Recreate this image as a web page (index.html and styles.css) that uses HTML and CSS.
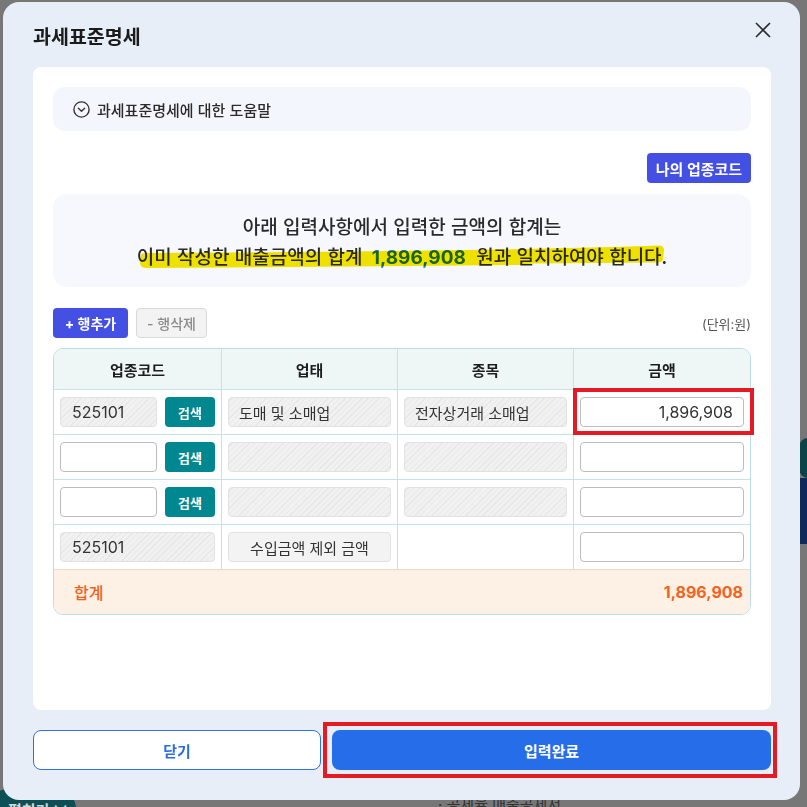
FILE: index.html
```html
<!DOCTYPE html>
<html lang="ko">
<head>
<meta charset="utf-8">
<title>과세표준명세</title>
<link rel="stylesheet" href="styles.css">
</head>
<body>
<div class="backdrop">
  <div class="bg-pill">펼치기 ∨</div>
  <div class="bg-navy"></div>
  <div class="bg-teal"></div>
  <div class="bg-text">· 공제율 매출공제서</div>

  <section class="modal">
    <header class="modal-head">
      <h1 class="modal-title">과세표준명세</h1>
      <button class="close-btn" aria-label="닫기">
        <svg width="16" height="16" viewBox="0 0 16 16"><path d="M1 1 L15 15 M15 1 L1 15" stroke="#2b2b2b" stroke-width="1.6" fill="none"/></svg>
      </button>
    </header>

    <div class="panel">
      <div class="help">
        <svg class="help-icon" width="17" height="17" viewBox="0 0 17 17"><circle cx="8.5" cy="8.5" r="7.6" stroke="#333" stroke-width="1.4" fill="none"/><path d="M5.4 7.2 L8.5 10.2 L11.6 7.2" stroke="#333" stroke-width="1.4" fill="none" stroke-linecap="round" stroke-linejoin="round"/></svg>
        <span>과세표준명세에 대한 도움말</span>
      </div>

      <div class="code-row">
        <button class="btn-indigo btn-mycode">나의 업종코드</button>
      </div>

      <div class="notice">
        <p class="notice-line">아래 입력사항에서 입력한 금액의 합계는</p>
        <p class="notice-line">이미 작성한 매출금액의 합계 <span class="notice-num">1,896,908</span> 원과 일치하여야 합니다.</p>
        <svg class="marker" viewBox="0 0 698 93" preserveAspectRatio="none"><path d="M88 61 Q88 59 94 59 L300 57.5 L415 56 L470 55 L560 53 L607 51.5 Q611 52 611 56 L610 66 Q609 68.5 604 68.5 L480 69.5 L472 71 L300 72.5 L94 74 Q87 74 87 69 Z" fill="#f7e800"/></svg>
      </div>

      <div class="toolbar">
        <button class="btn-indigo btn-add">+ 행추가</button>
        <button class="btn-del">- 행삭제</button>
        <span class="unit">(단위:원)</span>
      </div>

      <div class="table-area">
        <div class="tbl">
          <div class="th">업종코드</div>
          <div class="th">업태</div>
          <div class="th">종목</div>
          <div class="th th-last">금액</div>

          <div class="td"><div class="code-cell"><div class="box hatch code-box">525101</div><button class="btn-search">검색</button></div></div>
          <div class="td"><div class="box hatch">도매 및 소매업</div></div>
          <div class="td"><div class="box hatch">전자상거래 소매업</div></div>
          <div class="td td-last"><input class="inp inp-amount" type="text" value="1,896,908"></div>

          <div class="td"><div class="code-cell"><input class="inp inp-code" type="text" value=""><button class="btn-search">검색</button></div></div>
          <div class="td"><div class="box hatch"></div></div>
          <div class="td"><div class="box hatch"></div></div>
          <div class="td td-last"><input class="inp inp-amount" type="text" value=""></div>

          <div class="td"><div class="code-cell"><input class="inp inp-code" type="text" value=""><button class="btn-search">검색</button></div></div>
          <div class="td"><div class="box hatch"></div></div>
          <div class="td"><div class="box hatch"></div></div>
          <div class="td td-last"><input class="inp inp-amount" type="text" value=""></div>

          <div class="td td-row4"><div class="box hatch code-box">525101</div></div>
          <div class="td td-row4"><div class="box plain">수입금액 제외 금액</div></div>
          <div class="td td-row4"></div>
          <div class="td td-last td-row4"><input class="inp inp-amount" type="text" value=""></div>

          <div class="total">
            <span class="total-label">합계</span>
            <span class="total-value">1,896,908</span>
          </div>
        </div>
        <div class="annot annot-cell"></div>
      </div>
    </div>

    <footer class="modal-foot">
      <button class="btn-outline">닫기</button>
      <div class="primary-wrap">
        <button class="btn-primary">입력완료</button>
        <div class="annot annot-btn"></div>
      </div>
    </footer>
  </section>
</div>
</body>
</html>
```

FILE: styles.css
```css
* { box-sizing: border-box; }

body {
  margin: 0;
  font-family: Inter, "Noto Sans CJK KR", sans-serif;
  color: #222;
}

button {
  font-family: inherit;
  cursor: pointer;
}

.backdrop {
  position: relative;
  width: 807px;
  height: 807px;
  background: #777777;
  padding: 2px 7px 7px 3px;
  overflow: hidden;
}

/* underlying page fragments, dimmed behind the dialog */
.bg-pill {
  position: absolute;
  left: -12px;
  top: 789px;
  width: 88px;
  height: 40px;
  border-radius: 20px;
  background: #0c4f54;
  color: #cfd8d8;
  font-size: 15px;
  font-weight: 700;
  padding: 10px 0 0 20px;
}
.bg-navy {
  position: absolute;
  right: 0;
  top: 478px;
  width: 7px;
  height: 66px;
  background: #0f2a5a;
}
.bg-teal {
  position: absolute;
  right: -10px;
  top: 438px;
  width: 18px;
  height: 40px;
  border-radius: 10px;
  background: #0a4449;
}
.bg-text {
  position: absolute;
  left: 438px;
  top: 793px;
  font-size: 15px;
  color: #333;
}

.modal {
  position: relative;
  z-index: 1;
  height: 798px;
  background: #e7eef8;
  border-radius: 16px;
  padding: 0 29px 0 30px;
  display: flex;
  flex-direction: column;
}

.modal-head {
  height: 65px;
  display: flex;
  justify-content: space-between;
  align-items: flex-start;
  padding-top: 20px;
}

.modal-title {
  margin: 2px 0 0;
  font-size: 19.5px;
  line-height: 26px;
  font-weight: 700;
  color: #1b1b1b;
}

.close-btn {
  width: 16px;
  height: 16px;
  padding: 0;
  border: 0;
  background: none;
  display: block;
}
.close-btn svg { display: block; }

.panel {
  height: 643px;
  background: #fff;
  border-radius: 8px;
  padding: 20px;
}

.help {
  height: 44px;
  background: #f3f7fd;
  border-radius: 12px;
  display: flex;
  align-items: center;
  gap: 7px;
  padding-left: 20px;
  font-family: "Noto Sans CJK KR Medium", "Noto Sans CJK KR", sans-serif;
  font-size: 15px;
  font-weight: 500;
  color: #2b2b2b;
}
.help-icon { display: block; flex: none; }

.code-row {
  margin-top: 22px;
  display: flex;
  justify-content: flex-end;
}

.btn-indigo {
  height: 30px;
  border: 0;
  border-radius: 4px;
  background: #4450e4;
  color: #fff;
  font-weight: 700;
  padding: 0;
}
.btn-mycode {
  width: 104px;
  font-size: 15px;
}

.notice {
  position: relative;
  margin-top: 11px;
  height: 93px;
  background: #f6f8fd;
  border-radius: 14px;
  padding-top: 17px;
  text-align: center;
}
.notice-line {
  margin: 0;
  font-family: "Noto Sans CJK KR Medium", "Noto Sans CJK KR", sans-serif;
  font-size: 19px;
  line-height: 30px;
  font-weight: 500;
  color: #2a2a2a;
}
.notice-num {
  font-family: Inter, sans-serif;
  font-weight: 700;
  font-size: 19px;
  color: #1c6ee6;
  margin: 0 5px 0 4px;
}
.marker {
  position: absolute;
  left: 0;
  top: 0;
  width: 100%;
  height: 100%;
  mix-blend-mode: multiply;
  pointer-events: none;
}

.toolbar {
  margin-top: 21px;
  height: 30px;
  display: flex;
  align-items: center;
  gap: 8px;
}
.btn-add {
  width: 75px;
  font-size: 14px;
}
.btn-del {
  width: 71px;
  height: 30px;
  padding: 0;
  border: 1px solid #d9d9d9;
  border-radius: 4px;
  background: #f3f3f3;
  color: #8a8a8a;
  font-size: 14px;
  font-weight: 500;
}
.unit {
  margin-left: auto;
  font-size: 13px;
  color: #555;
}

.table-area {
  position: relative;
  margin-top: 10px;
}

.tbl {
  border: 1px solid #bcdde3;
  border-radius: 10px;
  overflow: hidden;
  display: grid;
  grid-template-columns: 168px 176px 176px 176px;
}

.th {
  height: 41px;
  background: #eef7f6;
  border-right: 1px solid #c5e2e6;
  border-bottom: 1px solid #c5e2e6;
  display: flex;
  align-items: center;
  justify-content: center;
  font-size: 15px;
  font-weight: 700;
  color: #1e1e1e;
}
.th-last { border-right: 0; }

.td {
  height: 45px;
  padding: 7px 6px;
  border-right: 1px solid #c5e2e6;
  border-bottom: 1px solid #c5e2e6;
}
.td-last { border-right: 0; }
.td-row4 { border-bottom-color: #ecd9c6; }

.code-cell {
  display: flex;
  gap: 8px;
}

.box {
  height: 30px;
  border-radius: 4px;
  border: 1px solid #e1e1e1;
  display: flex;
  align-items: center;
  padding: 0 10px;
  font-size: 15px;
  color: #333;
  white-space: nowrap;
}
.hatch {
  background: repeating-linear-gradient(135deg, #f1f1f1 0 2px, #e7e7e7 2px 3px, #f1f1f1 3px 4px);
}
.plain {
  background: #f3f3f3;
  justify-content: center;
}
.code-box {
  flex: 1;
  padding-left: 11px;
  font-size: 16px;
  color: #333;
}
.code-cell .code-box { width: 97px; flex: none; }

.btn-search {
  width: 50px;
  height: 30px;
  flex: none;
  border: 0;
  border-radius: 4px;
  background: #00878f;
  color: #fff;
  font-size: 13px;
  font-weight: 700;
  padding: 0;
}

.inp {
  display: block;
  height: 30px;
  border: 1px solid #bdbdbd;
  border-radius: 4px;
  background: #fff;
  font-family: Inter, "Noto Sans CJK KR", sans-serif;
  font-size: 16px;
  color: #333;
  padding: 0 10px;
  outline: none;
}
.inp-code { width: 97px; flex: none; }
.inp-amount {
  width: 100%;
  text-align: right;
}

.total {
  grid-column: 1 / -1;
  height: 44px;
  background: #fdf0e4;
  display: flex;
  align-items: center;
  justify-content: space-between;
  padding: 0 7px 0 20px;
}
.total-label {
  font-size: 16px;
  font-weight: 500;
  color: #f2601c;
}
.total-value {
  font-size: 16px;
  font-weight: 700;
  color: #f2631f;
}

.annot {
  position: absolute;
  border: 4px solid #e41b22;
  pointer-events: none;
}
.annot-cell {
  left: 520px;
  top: 40px;
  width: 181px;
  height: 47px;
}

.modal-foot {
  margin-top: 20px;
  display: grid;
  grid-template-columns: 288px 1fr;
  gap: 11px;
}

.btn-outline {
  height: 40px;
  border: 1px solid #2f70e6;
  border-radius: 8px;
  background: #fff;
  color: #2a6ce6;
  font-size: 15px;
  font-weight: 700;
}

.primary-wrap { position: relative; }

.btn-primary {
  display: block;
  width: 100%;
  height: 40px;
  border: 0;
  border-radius: 8px;
  background: #256de9;
  color: #fff;
  font-size: 15px;
  font-weight: 700;
}
.annot-btn {
  left: -9px;
  right: -6px;
  top: -8px;
  bottom: -8px;
}
```
